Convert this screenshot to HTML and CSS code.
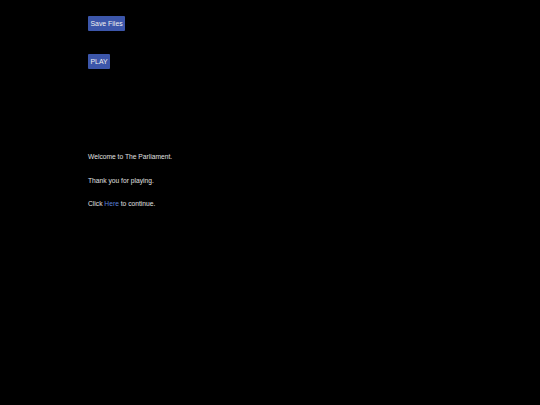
FILE: index.html
```html
<!DOCTYPE html>
<html>
<head>
<meta charset="utf-8">
<link rel="stylesheet" href="styles.css">
</head>
<body>
<main class="page">
  <div class="controls">
    <button class="btn">Save Files</button>
    <button class="btn">PLAY</button>
  </div>
  <div class="messages">
    <p class="msg">Welcome to The Parliament.</p>
    <p class="msg">Thank you for playing.</p>
    <p class="msg">Click <a class="link" href="#">Here</a> to continue.</p>
  </div>
</main>
</body>
</html>
```

FILE: styles.css
```css
html, body {
  margin: 0;
  padding: 0;
  background: #000;
  height: 100%;
}
.page {
  padding: 16px 0 0 88px;
  font-family: "Liberation Sans", Arial, sans-serif;
  font-size: 7px;
  color: #e0e0e0;
}
.controls {
  display: flex;
  flex-direction: column;
  align-items: flex-start;
  gap: 23px;
}
.btn {
  font-family: "Liberation Sans", Arial, sans-serif;
  font-size: 6.9px;
  color: #f0f0f0;
  background: #3c56aa;
  border: none;
  border-radius: 1px;
  height: 15px;
  padding: 0 2.5px;
  margin: 0;
  line-height: 15px;
}
.messages {
  margin-top: 84px;
  display: flex;
  flex-direction: column;
  gap: 15.5px;
  font-size: 6.7px;
}
.msg {
  margin: 0;
  line-height: 8px;
}
.link {
  color: #5b80d8;
  text-decoration: none;
}
```
